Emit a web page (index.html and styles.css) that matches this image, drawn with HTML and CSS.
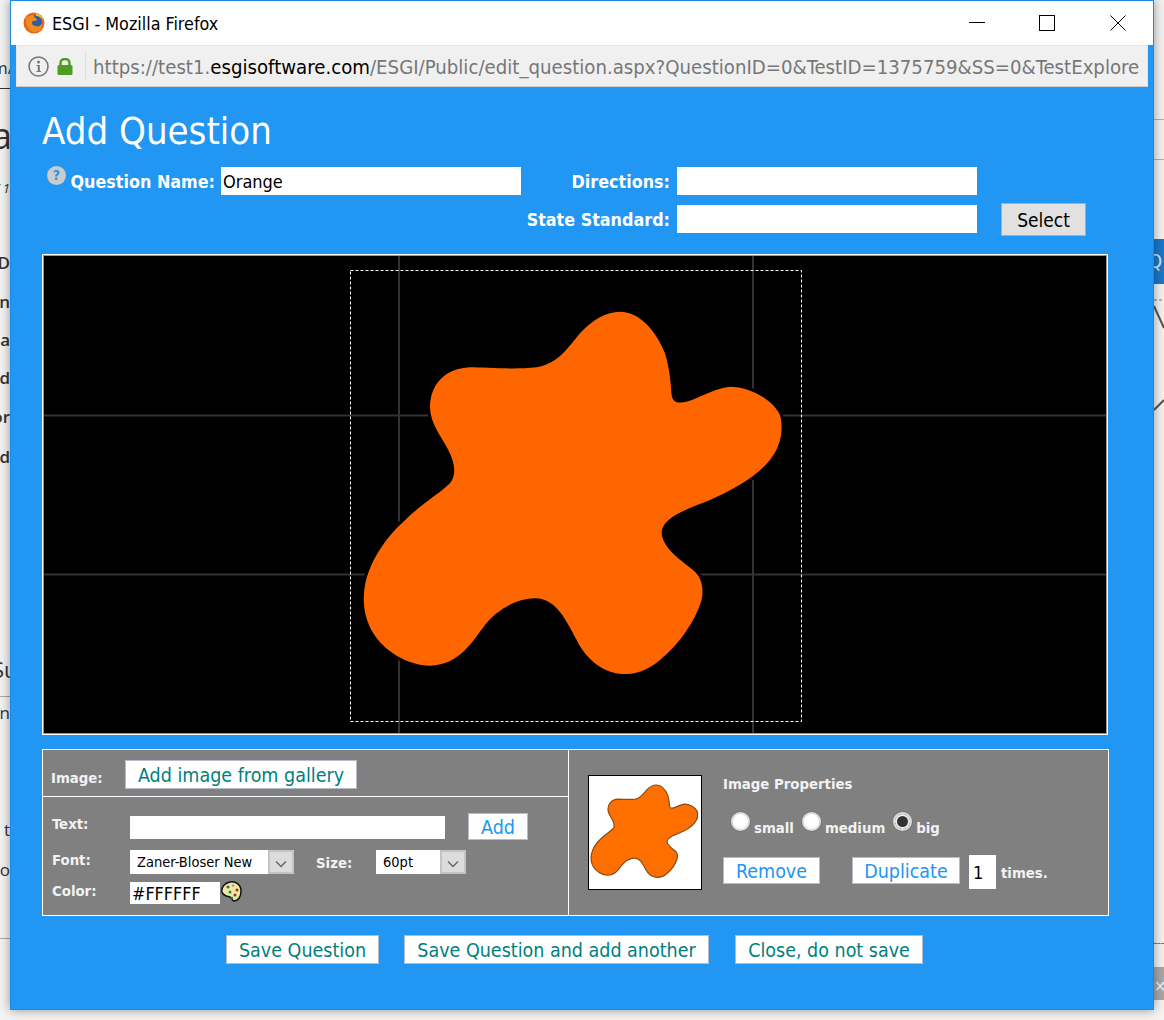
FILE: index.html
```html
<!DOCTYPE html>
<html lang="en">
<head>
    <meta charset="UTF-8">
    <meta name="viewport" content="width=device-width, initial-scale=1.0">
    <title>ESGI - Mozilla Firefox</title>
    <link rel="stylesheet" href="styles.css">
</head>
<body>
    <!-- page behind the popup, only the edges show -->
    <div class="behind">
        <span class="bit bit-url">m/</span>
        <span class="rule rule-top"></span>
        <span class="bit bit-title">a</span>
        <span class="bit bit-date">/ 1</span>
        <span class="bit bit-d1">D</span>
        <span class="bit bit-n">n</span>
        <span class="bit bit-a">a</span>
        <span class="bit bit-d2">d</span>
        <span class="bit bit-or">or</span>
        <span class="bit bit-d3">d</span>
        <span class="bit bit-su">Su</span>
        <span class="rule rule-su"></span>
        <span class="bit bit-r">n</span>
        <span class="bit bit-t">t</span>
        <span class="bit bit-ro">ro</span>
        <span class="rule rule-low"></span>
        <span class="side-line side-line-1"></span>
        <span class="side-line side-line-2"></span>
        <span class="side-tab">Q</span>
        <svg class="side-art" viewBox="0 0 10 140">
            <path d="M0 22 L10 44 M0 126 L10 116" fill="none" stroke="#555" stroke-width="2"/>
            <path d="M0 16 H10" fill="none" stroke="#777" stroke-dasharray="3 2"/>
        </svg>
        <span class="side-dash"></span>
        <span class="side-block">✕</span>
    </div>

    <div class="window">
        <div class="titlebar">
            <svg class="ff-icon" viewBox="0 0 22 22">
                <circle cx="11" cy="11" r="10.5" fill="#e8641b"/>
                <circle cx="12" cy="10" r="7" fill="#2a5ea8"/>
                <path d="M3 6 C2 12 5 20 12 20 C17 20 20 16 19 11 C18 14 15 15 12 14 C9 13 8 11 10 9 C12 9 14 9 14 7 C12 6 11 5 11 3 C8 3 5 4 3 6 Z" fill="#f08a1d"/>
                <path d="M13 1 C17 2 20 5 21 9 C19 6 16 4 13 4 Z" fill="#f7c02c"/>
            </svg>
            <span class="window-title">ESGI - Mozilla Firefox</span>
            <div class="window-controls">
                <svg class="ctl ctl-min" viewBox="0 0 16 16"><path d="M0 7.5 H16" stroke="#000" fill="none"/></svg>
                <svg class="ctl ctl-max" viewBox="0 0 16 16"><rect x="0.5" y="0.5" width="15" height="15" stroke="#000" fill="none"/></svg>
                <svg class="ctl ctl-close" viewBox="0 0 16 16"><path d="M0.5 0.5 L15.5 15.5 M15.5 0.5 L0.5 15.5" stroke="#000" fill="none"/></svg>
            </div>
        </div>
        <div class="urlbar">
            <svg class="info-icon" viewBox="0 0 21 21">
                <circle cx="10.5" cy="10.5" r="9.5" fill="none" stroke="#777" stroke-width="1.6"/>
                <circle cx="10.5" cy="6" r="1.5" fill="#777"/>
                <path d="M8.5 9 H11.8 V15 H13 V16 H8.5 V15 H9.8 V10 H8.5 Z" fill="#777"/>
            </svg>
            <svg class="lock-icon" viewBox="0 0 16 17">
                <path d="M3.5 7 V5 C3.5 2.4 5.4 1 8 1 C10.6 1 12.5 2.4 12.5 5 V7" fill="none" stroke="#4e9d22" stroke-width="2.4"/>
                <rect x="0.5" y="7" width="15" height="10" rx="1.5" fill="#4e9d22"/>
            </svg>
            <span class="url-sep"></span>
            <span class="url">https://test1.<b>esgisoftware.com</b>/ESGI/Public/edit_question.aspx?QuestionID=0&amp;TestID=1375759&amp;SS=0&amp;TestExplore</span>
        </div>

        <div class="content">
            <h1>Add Question</h1>

            <div class="fields">
                <div class="field-label field-label-first">
                    <span class="help-icon">?</span>
                    <label for="questionName">Question Name:</label>
                </div>
                <input type="text" id="questionName" class="field-input" value="Orange">
                <label class="field-label" for="directions">Directions:</label>
                <input type="text" id="directions" class="field-input">
                <span></span>
                <span></span>

                <span></span>
                <span></span>
                <label class="field-label" for="stateStandard">State Standard:</label>
                <input type="text" id="stateStandard" class="field-input state-input">
                <span></span>
                <button class="select-btn">Select</button>
            </div>

            <div class="canvas">
                <svg class="canvas-art" viewBox="44 256 1062 477">
                    <defs>
                        <path id="blob" d="M840 155 C900 155 950 215 975 280 C990 330 992 370 995 405 C998 425 1010 430 1030 427 C1070 420 1120 385 1170 380 C1230 380 1300 420 1320 465 C1332 510 1322 560 1290 600 C1250 650 1180 690 1110 720 C1050 745 965 770 965 820 C970 870 1030 905 1065 935 C1085 955 1092 985 1085 1020 C1065 1085 1020 1150 960 1200 C920 1235 880 1243 850 1242 C790 1240 740 1200 710 1140 C680 1085 650 1015 585 1015 C530 1015 470 1050 435 1095 C400 1140 360 1215 270 1217 C200 1217 130 1170 100 1120 C75 1080 65 1030 75 975 C90 900 140 830 190 785 C240 735 300 700 330 670 C350 645 345 610 325 570 C305 530 270 490 270 440 C270 380 310 325 390 322 C440 322 520 330 590 322 C650 312 680 270 720 220 C755 180 800 155 840 155 Z"/>
                    </defs>
                    <path class="grid-line" d="M399 256 V733 M753 256 V733 M44 415.5 H1106 M44 574.5 H1106"/>
                    <rect class="drop-area" x="350.5" y="270.5" width="451" height="451"/>
                    <g class="blob-main" transform="translate(340 260) scale(0.3333)"><use href="#blob"/></g>
                </svg>
            </div>

            <div class="panel">
                <div class="panel-left">
                    <div class="image-row">
                        <span class="small-label image-label">Image:</span>
                        <button class="btn btn-teal">Add image from gallery</button>
                    </div>
                    <div class="text-rows">
                        <div class="text-row text-row-text">
                            <span class="small-label row-label">Text:</span>
                            <input type="text" class="text-input">
                            <button class="btn btn-blue add-btn">Add</button>
                        </div>
                        <div class="text-row text-row-font">
                            <span class="small-label row-label">Font:</span>
                            <div class="fake-select font-select">
                                <span class="fake-value">Zaner-Bloser New</span>
                                <span class="fake-arrow"><svg viewBox="0 0 12 8"><path d="M1 1.5 L6 6.5 L11 1.5" fill="none" stroke="#666" stroke-width="1.4"/></svg></span>
                            </div>
                            <span class="small-label size-label">Size:</span>
                            <div class="fake-select size-select">
                                <span class="fake-value">60pt</span>
                                <span class="fake-arrow"><svg viewBox="0 0 12 8"><path d="M1 1.5 L6 6.5 L11 1.5" fill="none" stroke="#666" stroke-width="1.4"/></svg></span>
                            </div>
                        </div>
                        <div class="text-row text-row-color">
                            <span class="small-label row-label">Color:</span>
                            <input type="text" class="color-input" value="#FFFFFF">
                            <svg class="palette" viewBox="0 0 21 21">
                                <path d="M9 1 C15 0 20 4 20 10 C20 16 17 20 13 20 C11 20 11 17 9 16 C6 15 2 15 1 11 C0 6 4 2 9 1 Z" fill="#ece9a0" stroke="#111" stroke-width="1.5"/>
                                <circle cx="7" cy="6" r="1.5" fill="#6a4a80"/>
                                <circle cx="12" cy="4.5" r="1.2" fill="#999"/>
                                <circle cx="16" cy="9" r="1.5" fill="#b22"/>
                                <circle cx="14" cy="14" r="1.5" fill="#b22"/>
                                <circle cx="9" cy="11" r="1.5" fill="#2a8a4a"/>
                                <circle cx="11" cy="17" r="1.2" fill="#2a8a4a"/>
                            </svg>
                        </div>
                    </div>
                </div>
                <div class="panel-right">
                    <div class="thumb">
                        <svg viewBox="0 0 112 113"><g class="blob-thumb" transform="translate(-4 -4.2) scale(0.085)"><use href="#blob"/></g></svg>
                    </div>
                    <div class="props">
                        <div class="small-label props-title">Image Properties</div>
                        <div class="radio-row">
                            <input type="radio" name="imgSize" class="radio" id="sizeSmall">
                            <label class="small-label" for="sizeSmall">small</label>
                            <input type="radio" name="imgSize" class="radio" id="sizeMedium">
                            <label class="small-label" for="sizeMedium">medium</label>
                            <input type="radio" name="imgSize" class="radio" id="sizeBig" checked>
                            <label class="small-label" for="sizeBig">big</label>
                        </div>
                        <div class="action-row">
                            <button class="btn btn-blue remove-btn">Remove</button>
                            <button class="btn btn-blue duplicate-btn">Duplicate</button>
                            <input type="text" class="times-input" value="1">
                            <span class="small-label times-label">times.</span>
                        </div>
                    </div>
                </div>
            </div>

            <div class="footer-btns">
                <button class="btn btn-teal save-btn">Save Question</button>
                <button class="btn btn-teal save-add-btn">Save Question and add another</button>
                <button class="btn btn-teal close-btn">Close, do not save</button>
            </div>
        </div>
    </div>
</body>
</html>
```

FILE: styles.css
```css
* {
    box-sizing: border-box;
}
html, body {
    height: 100%;
}
body {
    margin: 0;
    background-color: #f3f3f3;
    font-family: "DejaVu Sans Condensed", "Noto Sans", sans-serif;
    overflow: hidden;
    position: relative;
}

/* page behind the popup */
.behind {
    position: absolute;
    inset: 0;
}
.bit {
    position: absolute;
    left: -8px;
    width: 18px;
    text-align: right;
    overflow: hidden;
    font-family: "Open Sans", sans-serif;
    font-size: 17px;
    font-weight: 600;
    color: #333;
    line-height: 20px;
    white-space: nowrap;
}
.bit-url { top: 58px; font-weight: 400; }
.bit-title { top: 112px; height: 48px; line-height: 48px; font-size: 36px; font-weight: 400; }
.bit-date { top: 178px; font-size: 13px; font-style: italic; font-weight: 400; }
.bit-d1 { top: 253px; }
.bit-n { top: 292px; }
.bit-a { top: 330px; }
.bit-d2 { top: 368px; }
.bit-or { top: 407px; }
.bit-d3 { top: 447px; }
.bit-su { top: 655px; height: 28px; line-height: 28px; font-size: 22px; font-weight: 400; }
.bit-r { top: 703px; font-weight: 400; }
.bit-t { top: 820px; font-weight: 400; }
.bit-ro { top: 860px; font-weight: 400; }
.rule {
    position: absolute;
    left: 0;
    width: 10px;
    height: 1px;
    background-color: #aaa;
}
.rule-top { top: 88px; background-color: #333; }
.rule-su { top: 696px; }
.rule-low { top: 938px; }
.side-line {
    position: absolute;
    left: 1154px;
    right: 0;
    height: 1px;
    background-color: #a9bd9f;
}
.side-line-1 { top: 119px; }
.side-line-2 { top: 159px; }
.side-tab {
    position: absolute;
    left: 1154px;
    right: 0;
    top: 239px;
    height: 45px;
    background-color: #1c78c9;
    color: #cfe6fa;
    font-size: 20px;
    line-height: 45px;
    text-indent: -6px;
    overflow: hidden;
}
.side-art {
    position: absolute;
    left: 1154px;
    top: 284px;
    width: 10px;
    height: 140px;
}
.side-dash {
    position: absolute;
    left: 1154px;
    right: 0;
    top: 943px;
    border-top: 1px dashed #777;
}
.side-block {
    position: absolute;
    left: 1154px;
    right: 0;
    top: 967px;
    height: 33px;
    background-color: #a8a8a8;
    color: #eee;
    font-size: 16px;
    line-height: 40px;
    overflow: hidden;
}

/* popup window */
.window {
    position: absolute;
    left: 10px;
    top: 0;
    width: 1144px;
    height: 1010px;
    background-color: #2196f3;
    border: 1px solid #1e88e5;
    box-shadow: 0 0 10px rgba(0, 0, 0, 0.4);
}
.titlebar {
    height: 44px;
    background-color: white;
    display: flex;
    align-items: center;
    padding-left: 12px;
}
.ff-icon {
    width: 22px;
    height: 22px;
}
.window-title {
    margin-left: 7px;
    font-size: 17.8px;
    color: #000;
}
.window-controls {
    margin-left: auto;
    display: flex;
    align-items: center;
    padding-right: 27px;
}
.ctl {
    width: 16px;
    height: 16px;
    display: block;
}
.ctl-max {
    margin-left: 54px;
}
.ctl-close {
    margin-left: 55px;
}
.urlbar {
    height: 42px;
    margin: 0 5px;
    background-color: #f0f0f0;
    border: 1px solid #e6e6e6;
    border-bottom-color: #ccc;
    display: flex;
    align-items: center;
    padding-left: 11px;
}
.info-icon {
    width: 21px;
    height: 21px;
}
.lock-icon {
    width: 16px;
    height: 17px;
    margin-left: 8px;
}
.url-sep {
    width: 1px;
    height: 28px;
    margin-left: 12px;
    background-color: #ddd;
}
.url {
    margin-left: 7px;
    padding-top: 2px;
    font-size: 20.2px;
    color: #777;
    white-space: nowrap;
    overflow: hidden;
    width: 1048px;
}
.url b {
    font-weight: normal;
    color: #000;
}
.content {
    padding-left: 31px;
}
h1 {
    margin: 0 0 14px;
    padding-top: 22px;
    font-size: 38px;
    line-height: 44px;
    font-weight: normal;
    color: white;
}

/* name, directions, standard */
.fields {
    display: grid;
    grid-template-columns: 179px 300px 156px 300px 24px 85px;
    row-gap: 8px;
    align-items: center;
    width: 1044px;
}
.field-label {
    font-size: 17.8px;
    font-weight: bold;
    color: white;
    text-align: right;
    padding-right: 7px;
    white-space: nowrap;
}
.field-label-first {
    display: flex;
    padding-left: 5px;
    padding-right: 6px;
    justify-content: space-between;
}
.help-icon {
    width: 19px;
    height: 19px;
    margin-top: -5px;
    border-radius: 50%;
    background-color: #ccc;
    color: #2196f3;
    font-size: 14px;
    line-height: 19px;
    text-align: center;
}
.field-input {
    height: 28px;
    width: 300px;
    border: none;
    padding: 0 2px;
    font-family: "DejaVu Sans Condensed", "Noto Sans", sans-serif;
    font-size: 18px;
    color: #000;
    background-color: white;
}
.state-input {
    margin-bottom: 1px;
}
.select-btn {
    width: 85px;
    height: 33px;
    background-color: #e1e1e1;
    border: 1px solid #adadad;
    font-family: "DejaVu Sans Condensed", "Noto Sans", sans-serif;
    font-size: 19px;
    color: #000;
    padding: 0;
}

/* drawing area */
.canvas {
    margin-top: 18px;
    width: 1066px;
    height: 481px;
    padding: 1px;
    border: 1px solid white;
    background-color: #999;
}
.canvas-art {
    display: block;
    width: 1062px;
    height: 477px;
    background-color: black;
}
.grid-line {
    stroke: #333;
    stroke-width: 2;
    fill: none;
}
.drop-area {
    fill: none;
    stroke: white;
    stroke-dasharray: 3 2;
}
.blob-main {
    fill: #ff6600;
    stroke: black;
    stroke-width: 18;
    paint-order: stroke;
}
.blob-thumb {
    fill: #ff6f00;
    stroke: #8a4a14;
    stroke-width: 14;
}

/* tools */
.panel {
    margin-top: 14px;
    width: 1067px;
    height: 167px;
    display: flex;
    background-color: gray;
    border: 1px solid white;
}
.panel-left {
    width: 526px;
    border-right: 1px solid white;
}
.small-label {
    font-size: 14.8px;
    font-weight: bold;
    color: #f2f2f2;
}
.image-row {
    height: 47px;
    display: flex;
    align-items: center;
    padding-left: 8px;
    border-bottom: 1px solid white;
}
.image-label {
    width: 74px;
    padding-top: 8px;
}
.btn {
    height: 29px;
    padding: 2px 0 0;
    background-color: white;
    border: 1px solid #b4bcc8;
    font-family: "DejaVu Sans Condensed", "Noto Sans", sans-serif;
    font-size: 19.5px;
}
.btn-teal {
    color: #007f7f;
}
.btn-blue {
    color: #2196f3;
}
.image-row .btn {
    width: 232px;
    margin-top: 3px;
}
.text-rows {
    padding: 16px 0 0 9px;
}
.text-row {
    display: flex;
    align-items: center;
}
.row-label {
    width: 78px;
    margin-top: -6px;
}
.text-row-text {
    height: 27px;
}
.text-row-font {
    height: 24px;
    margin-top: 10px;
}
.text-row-color {
    height: 22px;
    margin-top: 8px;
}
.text-input {
    width: 315px;
    height: 23px;
    margin-top: 2px;
    border: none;
    background-color: white;
}
.add-btn {
    width: 60px;
    height: 27px;
    margin-left: 23px;
}
.fake-select {
    display: flex;
    height: 24px;
    background-color: white;
}
.font-select {
    width: 164px;
}
.size-select {
    width: 90px;
}
.fake-value {
    flex: 1;
    padding-left: 7px;
    font-size: 14.5px;
    line-height: 24px;
    color: #000;
}
.fake-arrow {
    width: 26px;
    height: 24px;
    background-color: #dcdcdc;
    border: 2px solid #c4c4c4;
    display: flex;
    align-items: center;
    justify-content: center;
}
.fake-arrow svg {
    width: 12px;
    height: 8px;
    margin-top: 3px;
}
.size-label {
    width: 60px;
    margin-left: 22px;
}
.color-input {
    width: 90px;
    height: 22px;
    border: none;
    padding: 0 2px;
    background-color: white;
    font-family: "DejaVu Sans Condensed", "Noto Sans", sans-serif;
    font-size: 17.8px;
    color: #000;
}
.palette {
    width: 21px;
    height: 21px;
    margin: -4px 0 0 1px;
}
.panel-right {
    flex: 1;
    display: flex;
    padding: 25px 0 0 19px;
}
.thumb {
    width: 114px;
    height: 115px;
    background-color: white;
    border: 1px solid black;
}
.thumb svg {
    display: block;
    width: 112px;
    height: 113px;
}
.props {
    margin-left: 21px;
}
.props-title {
    height: 18px;
    line-height: 18px;
}
.radio-row {
    display: flex;
    align-items: flex-start;
    margin: 19px 0 0 8px;
    height: 24px;
}
.radio {
    appearance: none;
    flex: none;
    width: 19px;
    height: 19px;
    margin: 0 4px 0 0;
    border-radius: 50%;
    background-color: white;
    border: 2px solid #ddd;
    box-shadow: 0 0 0 1px #777;
}
.radio:checked {
    background-color: #333;
    box-shadow: 0 0 0 1px #777, inset 0 0 0 2px #eee;
}
.radio-row label {
    margin: 7px 8px 0 0;
}
.action-row {
    display: flex;
    align-items: center;
    height: 34px;
    margin-top: 19px;
}
.remove-btn {
    width: 97px;
    height: 27px;
    margin-top: -4px;
}
.duplicate-btn {
    width: 108px;
    height: 27px;
    margin-top: -4px;
    margin-left: 32px;
}
.times-input {
    width: 27px;
    height: 34px;
    margin-left: 9px;
    border: none;
    padding: 0 4px;
    background-color: white;
    font-family: "DejaVu Sans Condensed", "Noto Sans", sans-serif;
    font-size: 18px;
    color: #000;
}
.times-label {
    margin-left: 5px;
}
.footer-btns {
    margin-top: 19px;
    padding-left: 184px;
    display: flex;
    gap: 25px;
}
.save-btn {
    width: 153px;
}
.save-add-btn {
    width: 305px;
}
.close-btn {
    width: 188px;
    margin-left: 1px;
}
```
